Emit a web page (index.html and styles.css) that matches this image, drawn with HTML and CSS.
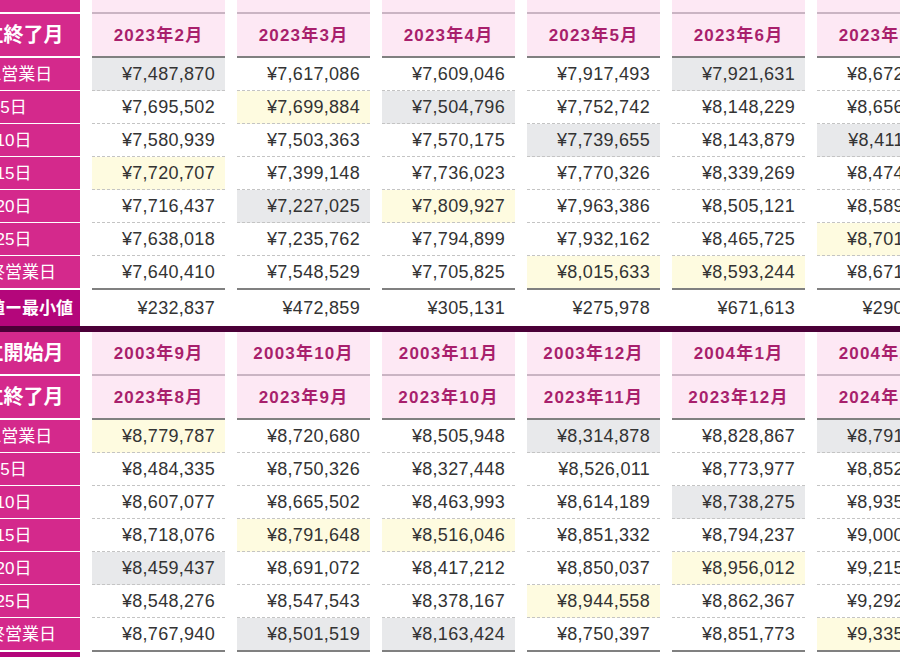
FILE: index.html
```html
<!DOCTYPE html>
<html lang="ja">
<head>
<meta charset="utf-8">
<title>積立シミュレーション</title>
<link rel="stylesheet" href="styles.css">
</head>
<body>
<div class="viewport">
<table class="sim">
<colgroup><col><col><col><col><col><col><col></colgroup>
<tbody>
<tr class="hd-start"><th>積立開始月</th><td>2003年3月</td><td>2003年4月</td><td>2003年5月</td><td>2003年6月</td><td>2003年7月</td><td>2003年8月</td></tr>
<tr class="hd-end"><th>積立終了月</th><td>2023年2月</td><td>2023年3月</td><td>2023年4月</td><td>2023年5月</td><td>2023年6月</td><td>2023年7月</td></tr>
<tr class="row"><th>第1営業日</th><td class="min">¥7,487,870</td><td>¥7,617,086</td><td>¥7,609,046</td><td>¥7,917,493</td><td class="min">¥7,921,631</td><td>¥8,672,315</td></tr>
<tr class="row"><th>5日</th><td>¥7,695,502</td><td class="max">¥7,699,884</td><td class="min">¥7,504,796</td><td>¥7,752,742</td><td>¥8,148,229</td><td>¥8,656,902</td></tr>
<tr class="row"><th>10日</th><td>¥7,580,939</td><td>¥7,503,363</td><td>¥7,570,175</td><td class="min">¥7,739,655</td><td>¥8,143,879</td><td class="min">¥8,411,487</td></tr>
<tr class="row"><th>15日</th><td class="max">¥7,720,707</td><td>¥7,399,148</td><td>¥7,736,023</td><td>¥7,770,326</td><td>¥8,339,269</td><td>¥8,474,130</td></tr>
<tr class="row"><th>20日</th><td>¥7,716,437</td><td class="min">¥7,227,025</td><td class="max">¥7,809,927</td><td>¥7,963,386</td><td>¥8,505,121</td><td>¥8,589,764</td></tr>
<tr class="row"><th>25日</th><td>¥7,638,018</td><td>¥7,235,762</td><td>¥7,794,899</td><td>¥7,932,162</td><td>¥8,465,725</td><td class="max">¥8,701,952</td></tr>
<tr class="row last"><th>最終営業日</th><td>¥7,640,410</td><td>¥7,548,529</td><td>¥7,705,825</td><td class="max">¥8,015,633</td><td class="max">¥8,593,244</td><td>¥8,671,208</td></tr>
<tr class="range"><th>最大値ー最小値</th><td>¥232,837</td><td>¥472,859</td><td>¥305,131</td><td>¥275,978</td><td>¥671,613</td><td>¥290,465</td></tr>
<tr class="sep"><td colspan="7"></td></tr>
<tr class="hd-start"><th>積立開始月</th><td>2003年9月</td><td>2003年10月</td><td>2003年11月</td><td>2003年12月</td><td>2004年1月</td><td>2004年2月</td></tr>
<tr class="hd-end"><th>積立終了月</th><td>2023年8月</td><td>2023年9月</td><td>2023年10月</td><td>2023年11月</td><td>2023年12月</td><td>2024年1月</td></tr>
<tr class="row"><th>第1営業日</th><td class="max">¥8,779,787</td><td>¥8,720,680</td><td>¥8,505,948</td><td class="min">¥8,314,878</td><td>¥8,828,867</td><td class="min">¥8,791,204</td></tr>
<tr class="row"><th>5日</th><td>¥8,484,335</td><td>¥8,750,326</td><td>¥8,327,448</td><td>¥8,526,011</td><td>¥8,773,977</td><td>¥8,852,619</td></tr>
<tr class="row"><th>10日</th><td>¥8,607,077</td><td>¥8,665,502</td><td>¥8,463,993</td><td>¥8,614,189</td><td class="min">¥8,738,275</td><td>¥8,935,087</td></tr>
<tr class="row"><th>15日</th><td>¥8,718,076</td><td class="max">¥8,791,648</td><td class="max">¥8,516,046</td><td>¥8,851,332</td><td>¥8,794,237</td><td>¥9,000,453</td></tr>
<tr class="row"><th>20日</th><td class="min">¥8,459,437</td><td>¥8,691,072</td><td>¥8,417,212</td><td>¥8,850,037</td><td class="max">¥8,956,012</td><td>¥9,215,338</td></tr>
<tr class="row"><th>25日</th><td>¥8,548,276</td><td>¥8,547,543</td><td>¥8,378,167</td><td class="max">¥8,944,558</td><td>¥8,862,367</td><td>¥9,292,871</td></tr>
<tr class="row last"><th>最終営業日</th><td>¥8,767,940</td><td class="min">¥8,501,519</td><td class="min">¥8,163,424</td><td>¥8,750,397</td><td>¥8,851,773</td><td class="max">¥9,335,126</td></tr>
<tr class="range"><th>最大値ー最小値</th><td>¥464,350</td><td>¥290,129</td><td>¥352,622</td><td>¥629,680</td><td>¥217,737</td><td>¥543,922</td></tr>
</tbody>
</table>
</div>
</body>
</html>
```
FILE: styles.css
```css
html, body {
  margin: 0;
  padding: 0;
  background: #ffffff;
}

.viewport {
  width: 900px;
  height: 657px;
  overflow: hidden;
}

.sim {
  border-collapse: separate;
  border-spacing: 12px 0;
  table-layout: fixed;
  width: 1027px;
  margin-left: -65px;
  margin-top: -30px;
  font-family: "Liberation Sans", "Noto Sans CJK JP", sans-serif;
}

.sim col {
  width: 133px;
}

.sim th,
.sim td {
  padding: 0;
  line-height: 1;
  box-sizing: border-box;
}

.sim th {
  background: #d4298c;
  color: #ffffff;
  text-align: center;
  font-weight: normal;
  font-size: 17px;
  border-bottom: 1px solid #ffffff;
}

/* header rows */
.hd-start,
.hd-end {
  height: 44px;
}

.hd-start th,
.hd-end th {
  font-size: 20px;
  font-weight: bold;
  border-bottom: 2px solid #ffffff;
}

.hd-start td,
.hd-end td {
  background: #fde8f4;
  color: #a81f6c;
  font-weight: bold;
  font-size: 17px;
  letter-spacing: 1.2px;
  text-align: center;
}

.hd-start td {
  border-bottom: 2px solid #cab4c3;
}

.hd-end td {
  border-bottom: 2px solid #808080;
}

/* data rows */
.row {
  height: 33px;
}

.row td {
  color: #333333;
  font-size: 18px;
  letter-spacing: 0.3px;
  text-align: right;
  padding-right: 10px;
  border-bottom: 1px dashed #c4c4c4;
}

.row.last {
  height: 34px;
}

.row.last td {
  border-bottom: 2px solid #808080;
}

.row.last th {
  border-bottom: 2px solid #ffffff;
}

.row td.min {
  background: #e8e9eb;
}

.row td.max {
  background: #fefbe0;
}

/* range row */
.range {
  height: 36px;
}

.range th {
  background: #b4067b;
  font-weight: bold;
  border-bottom: 0;
}

.range td {
  color: #333333;
  font-size: 18px;
  letter-spacing: 0.3px;
  text-align: right;
  padding-right: 10px;
}

/* separator */
.sep {
  height: 6px;
}

.sep td {
  background: #4b0037;
  height: 6px;
}
```
